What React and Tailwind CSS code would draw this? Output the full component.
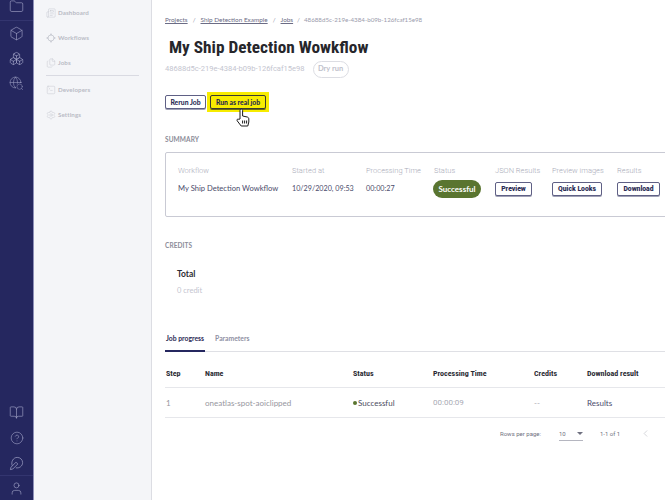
import React from 'react';
import { Folder, Box, Boxes, BookOpen, CircleHelp, User, ChevronLeft, Newspaper, Files, SquareTerminal, Settings, Globe, Search } from 'lucide-react';

const WorkflowIcon = ({ size, className }) => (
  <svg width={size} height={size} viewBox="0 0 12 12" fill="none" stroke="currentColor" strokeWidth="1" className={className}>
    <circle cx="6" cy="6" r="3.6" />
    <rect x="5" y="0.8" width="2" height="1.4" fill="currentColor" stroke="none" />
    <rect x="5" y="9.8" width="2" height="1.4" fill="currentColor" stroke="none" />
    <rect x="0.8" y="5" width="1.4" height="2" fill="currentColor" stroke="none" />
    <rect x="9.8" y="5" width="1.4" height="2" fill="currentColor" stroke="none" />
  </svg>
);

const FeedbackIcon = () => (
  <svg width="15" height="15" viewBox="0 0 15 15" fill="none" stroke="currentColor" strokeWidth="0.7">
    <path d="M3.2 9.6C1.8 6 4.2 1.4 8.2 1.4c3.2 0 5.4 2.4 5.4 5.2 0 3.4-3 5.8-6.8 5.2" />
    <path d="M1.4 13.6l.6-2.4 5-5 1.8 1.8-5 5z" />
  </svg>
);

const HandCursor = ({ className }) => (
  <svg width="14" height="19" viewBox="0 0 14 19" stroke="#1d1d1d" strokeWidth="1" strokeLinejoin="round" className={className}>
    <path fill="white" d="M4 11V2.4a1.3 1.3 0 0 1 2.6 0V8l4.6 1c1 .2 1.6 1 1.6 2v3l-1 4H5.2L1.2 12.8c-.8-1.1.6-2.4 1.6-1.5z" />
    <path fill="none" d="M6.6 12.5v3M8.6 12.5v3M10.6 12.5v3" />
  </svg>
);

const NavItem = ({ icon: Icon, label, className = '' }) => (
  <div className={`flex items-center gap-[2px] h-[25px] pl-[12px] ${className}`}>
    <Icon size={10} strokeWidth={1.1} className="text-[#c3c5ce]" />
    <span className="text-[6.2px] font-bold tracking-[0.1px] text-[#b9bbc5]">{label}</span>
  </div>
);

const SummaryCol = ({ label, className = '', children }) => (
  <div className={`flex flex-col shrink-0 ${className}`}>
    <span className="text-[7.5px] font-light leading-[12px] text-[#a9abb8] font-['Roboto',sans-serif] whitespace-nowrap">{label}</span>
    <div className="h-[18px] mt-[3px] flex items-center">{children}</div>
  </div>
);

const OutlineButton = ({ children, className = '' }) => (
  <button className={`h-[14px] px-[3px] border border-[#5f6085] rounded-[2px] bg-white shadow-[0_1px_0_#a0a1b5] text-[6.8px] font-black text-[#2b2c55] whitespace-nowrap flex items-center justify-center ${className}`}>
    {children}
  </button>
);

export default function App() {
  return (
    <div className="w-[665px] h-[500px] flex overflow-hidden bg-white font-['Lato',sans-serif]">
      {/* Icon rail */}
      <div className="w-[34px] shrink-0 flex flex-col items-center bg-[#25275f] border-r border-[#8e90b8] text-[#a3a5c9]">
        <div className="h-[21px] w-full flex items-start justify-center overflow-hidden border-b border-[#33356f]">
          <Folder size={15} strokeWidth={1} className="-mt-px" />
        </div>
        <div className="flex flex-col items-center gap-[10px] mt-[5px]">
          <Box size={15} strokeWidth={1} />
          <Boxes size={15} strokeWidth={1} />
          <div className="relative w-[15px] h-[15px]">
            <Globe size={13} strokeWidth={1} />
            <Search size={8} strokeWidth={1.3} className="absolute right-0 bottom-0 bg-[#25275f] rounded-full" />
          </div>
        </div>
        <div className="mt-auto flex flex-col items-center w-full">
          <BookOpen size={15} strokeWidth={1} />
          <CircleHelp size={14} strokeWidth={1} className="mt-[11px]" />
          <div className="mt-[11px]">
            <FeedbackIcon />
          </div>
          <div className="w-full border-t border-[#33356f] mt-[4px] pt-[5px] pb-[4px] flex justify-center">
            <User size={15} strokeWidth={1} />
          </div>
        </div>
      </div>

      {/* Sidebar */}
      <div className="w-[118px] shrink-0 bg-[#f4f5f8] border-r border-[#dcdde3]">
        <NavItem icon={Newspaper} label="Dashboard" />
        <NavItem icon={WorkflowIcon} label="Workflows" />
        <NavItem icon={Files} label="Jobs" />
        <div className="mx-[12px] border-t border-[#d9dae2]" />
        <NavItem icon={SquareTerminal} label="Developers" className="mt-[1px]" />
        <NavItem icon={Settings} label="Settings" />
      </div>

      {/* Main */}
      <div className="w-[560px] shrink-0 pl-[13px] pt-[15px]">
        <div className="flex items-center h-[9px] text-[6.4px] text-[#8f90a3] whitespace-nowrap">
          <span className="underline text-[#6b6c85]">Projects</span>
          <span className="ml-[5px]">/</span>
          <span className="underline text-[#6b6c85] ml-[5px]">Ship Detection Example</span>
          <span className="ml-[5px]">/</span>
          <span className="underline text-[#6b6c85] ml-[5px]">Jobs</span>
          <span className="ml-[4px]">/</span>
          <span className="text-[#9a9bac] text-[6.2px] ml-[4px]">48688d5c-219e-4384-b09b-126fcaf15e98</span>
        </div>

        <h1 className="mt-[10px] ml-[4px] text-[17.3px] leading-[26px] font-bold text-[#26262b] font-['Roboto',sans-serif] [font-stretch:75%] whitespace-nowrap">My Ship Detection Wowkflow</h1>

        <div className="flex items-center gap-[8px] h-[18px]">
          <span className="text-[7.55px] text-[#c4c5cf] font-['Roboto',sans-serif]">48688d5c-219e-4384-b09b-126fcaf15e98</span>
          <span className="h-[17px] w-[36px] border border-[#dcdde3] rounded-full text-[7.5px] font-bold text-[#c0c1cb] flex items-center justify-center">Dry run</span>
        </div>

        <div className="relative flex items-center mt-[14px] h-[20px]">
          <OutlineButton className="w-[41px]">Rerun Job</OutlineButton>
          <div className="ml-[1px] bg-[#f7ec00] px-[3px] py-[3px]">
            <button className="h-[14px] w-[56px] border border-[#3a3b30] rounded-[2px] shadow-[0_1px_0_#6c6a10] text-[6.8px] font-black text-[#26274f] whitespace-nowrap flex items-center justify-center">
              Run as real job
            </button>
          </div>
          <HandCursor className="absolute left-[71px] top-[16px]" />
        </div>

        <div className="mt-[23px] text-[6.5px] font-bold tracking-[0.1px] text-[#8b8c98] leading-[9px]">SUMMARY</div>

        <div className="mt-[8px] h-[65px] w-[540px] border border-[#c9cad4] rounded-[2px] flex pl-[12px] pt-[12px] font-['Roboto',sans-serif]">
          <SummaryCol label="Workflow" className="w-[114px]">
            <span className="text-[7.6px] text-[#4a4b6b] font-['Lato',sans-serif] whitespace-nowrap">My Ship Detection Wowkflow</span>
          </SummaryCol>
          <SummaryCol label="Started at" className="w-[74px]">
            <span className="text-[7.2px] text-[#4a4b6b] font-['Lato',sans-serif] whitespace-nowrap">10/29/2020, 09:53</span>
          </SummaryCol>
          <SummaryCol label="Processing Time" className="w-[68px]">
            <span className="text-[7.2px] text-[#4a4b6b] font-['Lato',sans-serif]">00:00:27</span>
          </SummaryCol>
          <SummaryCol label="Status" className="w-[61px]">
            <span className="h-[18px] w-[48px] -ml-[1px] rounded-full bg-[#5a7530] text-white text-[8px] font-bold flex items-center justify-center font-['Lato',sans-serif]">Successful</span>
          </SummaryCol>
          <SummaryCol label="JSON Results" className="w-[57px]">
            <OutlineButton className="w-[37px]">Preview</OutlineButton>
          </SummaryCol>
          <SummaryCol label="Preview images" className="w-[65px]">
            <OutlineButton className="w-[50px]">Quick Looks</OutlineButton>
          </SummaryCol>
          <SummaryCol label="Results" className="w-[50px]">
            <OutlineButton className="w-[43px]">Download</OutlineButton>
          </SummaryCol>
        </div>

        <div className="mt-[24px] text-[6.5px] font-bold tracking-[0.1px] text-[#8b8c98] leading-[9px]">CREDITS</div>
        <div className="mt-[18px] ml-[12px] text-[8.5px] font-bold text-[#2c2c34] leading-[12px]">Total</div>
        <div className="mt-[5px] ml-[12px] text-[7.5px] text-[#c4c5cf] leading-[12px]">0 credit</div>

        <div className="mt-[28px] flex items-end gap-[10px] border-b border-[#dfe0e5] h-[27px] w-[540px]">
          <div className="h-full flex items-center border-b-[2px] border-[#25275f] -mb-px text-[6.8px] font-bold text-[#2b2c55] px-[1px]">Job progress</div>
          <div className="h-full flex items-center text-[6.8px] font-bold text-[#8f90a3]">Parameters</div>
        </div>

        <div className="w-[540px] text-[8px]">
          <div className="grid grid-cols-[39px_148px_80px_101px_53px_1fr] items-center h-[36px] pt-[8px] pl-[1px] border-b border-[#e6e7eb] font-['Roboto',sans-serif] [font-stretch:75%] font-bold text-[#2c2c34]">
            <span>Step</span>
            <span>Name</span>
            <span>Status</span>
            <span>Processing Time</span>
            <span>Credits</span>
            <span>Download result</span>
          </div>
          <div className="grid grid-cols-[39px_148px_80px_101px_53px_1fr] items-center h-[30px] pl-[1px] border-b border-[#e6e7eb] text-[#96969e]">
            <span>1</span>
            <span>oneatlas-spot-aoiclipped</span>
            <span className="flex items-center gap-[1px] text-[#4a4b5e]">
              <span className="w-[4px] h-[4px] rounded-full bg-[#5a7530]" />Successful
            </span>
            <span className="font-['Roboto',sans-serif] text-[#a9abb5]">00:00:09</span>
            <span className="text-[#a9abb5]">--</span>
            <span className="text-[#4a4b6b]">Results</span>
          </div>
        </div>

        <div className="w-[500px] h-[30px] flex items-center text-[6px] text-[#6f7080] font-['Roboto',sans-serif]">
          <span className="ml-[335px] whitespace-nowrap">Rows per page:</span>
          <span className="ml-[18px] w-[24px] h-[14px] flex items-center justify-between border-b border-[#b5b6c0] -mb-[2px]">
            10
            <span className="w-0 h-0 border-l-[3px] border-r-[3px] border-t-[3px] border-l-transparent border-r-transparent border-t-[#6f7080]" />
          </span>
          <span className="ml-[17px] whitespace-nowrap">1-1 of 1</span>
          <ChevronLeft size={11} strokeWidth={1} className="ml-[20px] text-[#a5a6b0]" />
        </div>
      </div>
    </div>
  );
}
